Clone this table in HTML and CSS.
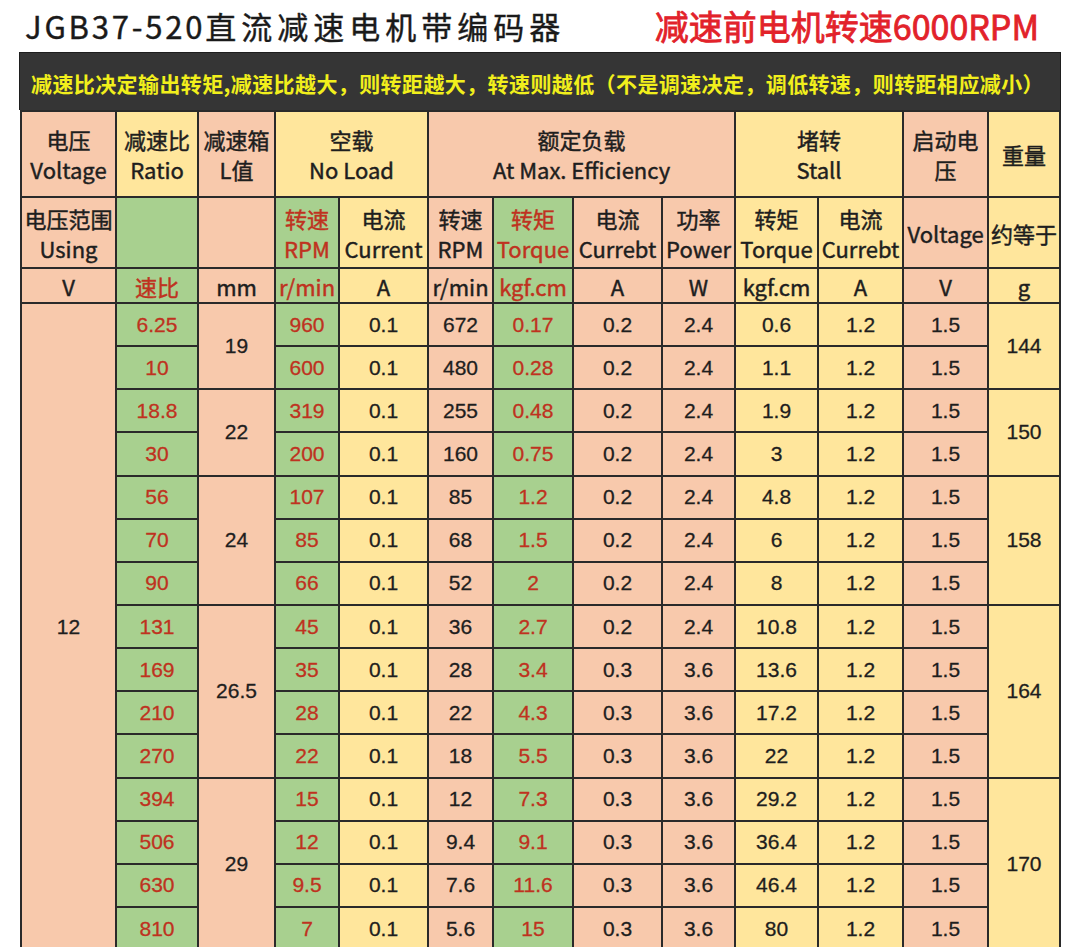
FILE: index.html
```html
<!DOCTYPE html>
<html lang="zh-CN">
<head>
<meta charset="utf-8">
<title>JGB37-520直流减速电机带编码器</title>
<link rel="stylesheet" href="styles.css">
</head>
<body>
<div class="page">
  <header class="titlebar">
    <h1 class="title"><span class="title-code">JGB37-520</span><span class="title-cn">直流减速电机带编码器</span></h1>
    <div class="subtitle">减速前电机转速6000RPM</div>
  </header>
  <div class="banner">减速比决定输出转矩,减速比越大，则转距越大，转速则越低（不是调速决定，调低转速，则转距相应减小）</div>
  <table class="spec">
    <colgroup>
      <col class="c1"><col class="c2"><col class="c3"><col class="c4"><col class="c5"><col class="c6"><col class="c7"><col class="c8"><col class="c9"><col class="c10"><col class="c11"><col class="c12"><col class="c13">
    </colgroup>
    <thead>
      <tr class="h1">
        <th class="s">电压<br>Voltage</th>
        <th class="y">减速比<br>Ratio</th>
        <th class="s">减速箱<br>L值</th>
        <th class="y" colspan="2">空载<br>No Load</th>
        <th class="s" colspan="4">额定负载<br>At Max. Efficiency</th>
        <th class="y stall" colspan="2">堵转<br>Stall</th>
        <th class="s">启动电<br>压</th>
        <th class="y">重量</th>
      </tr>
      <tr class="h2">
        <th class="s">电压范围<br>Using</th>
        <th class="g"></th>
        <th class="s"></th>
        <th class="g r">转速<br>RPM</th>
        <th class="y">电流<br>Current</th>
        <th class="s">转速<br>RPM</th>
        <th class="g r">转矩<br>Torque</th>
        <th class="s">电流<br>Currebt</th>
        <th class="s">功率<br>Power</th>
        <th class="y">转矩<br>Torque</th>
        <th class="y">电流<br>Currebt</th>
        <th class="s">Voltage</th>
        <th class="y">约等于</th>
      </tr>
      <tr class="h3">
        <th class="s">V</th>
        <th class="g r">速比</th>
        <th class="s">mm</th>
        <th class="g r">r/min</th>
        <th class="y">A</th>
        <th class="s">r/min</th>
        <th class="g r">kgf.cm</th>
        <th class="s">A</th>
        <th class="s">W</th>
        <th class="y">kgf.cm</th>
        <th class="y">A</th>
        <th class="s">V</th>
        <th class="y">g</th>
      </tr>
    </thead>
    <tbody>
      <tr>
        <td class="s" rowspan="15">12</td>
        <td class="g r">6.25</td><td class="s" rowspan="2">19</td>
        <td class="g r">960</td><td class="y">0.1</td><td class="s">672</td><td class="g r">0.17</td><td class="s">0.2</td><td class="s">2.4</td><td class="y">0.6</td><td class="y">1.2</td><td class="s">1.5</td>
        <td class="y" rowspan="2">144</td>
      </tr>
      <tr>
        <td class="g r">10</td>
        <td class="g r">600</td><td class="y">0.1</td><td class="s">480</td><td class="g r">0.28</td><td class="s">0.2</td><td class="s">2.4</td><td class="y">1.1</td><td class="y">1.2</td><td class="s">1.5</td>
      </tr>
      <tr>
        <td class="g r">18.8</td><td class="s" rowspan="2">22</td>
        <td class="g r">319</td><td class="y">0.1</td><td class="s">255</td><td class="g r">0.48</td><td class="s">0.2</td><td class="s">2.4</td><td class="y">1.9</td><td class="y">1.2</td><td class="s">1.5</td>
        <td class="y" rowspan="2">150</td>
      </tr>
      <tr>
        <td class="g r">30</td>
        <td class="g r">200</td><td class="y">0.1</td><td class="s">160</td><td class="g r">0.75</td><td class="s">0.2</td><td class="s">2.4</td><td class="y">3</td><td class="y">1.2</td><td class="s">1.5</td>
      </tr>
      <tr>
        <td class="g r">56</td><td class="s" rowspan="3">24</td>
        <td class="g r">107</td><td class="y">0.1</td><td class="s">85</td><td class="g r">1.2</td><td class="s">0.2</td><td class="s">2.4</td><td class="y">4.8</td><td class="y">1.2</td><td class="s">1.5</td>
        <td class="y" rowspan="3">158</td>
      </tr>
      <tr>
        <td class="g r">70</td>
        <td class="g r">85</td><td class="y">0.1</td><td class="s">68</td><td class="g r">1.5</td><td class="s">0.2</td><td class="s">2.4</td><td class="y">6</td><td class="y">1.2</td><td class="s">1.5</td>
      </tr>
      <tr>
        <td class="g r">90</td>
        <td class="g r">66</td><td class="y">0.1</td><td class="s">52</td><td class="g r">2</td><td class="s">0.2</td><td class="s">2.4</td><td class="y">8</td><td class="y">1.2</td><td class="s">1.5</td>
      </tr>
      <tr>
        <td class="g r">131</td><td class="s" rowspan="4">26.5</td>
        <td class="g r">45</td><td class="y">0.1</td><td class="s">36</td><td class="g r">2.7</td><td class="s">0.2</td><td class="s">2.4</td><td class="y">10.8</td><td class="y">1.2</td><td class="s">1.5</td>
        <td class="y" rowspan="4">164</td>
      </tr>
      <tr>
        <td class="g r">169</td>
        <td class="g r">35</td><td class="y">0.1</td><td class="s">28</td><td class="g r">3.4</td><td class="s">0.3</td><td class="s">3.6</td><td class="y">13.6</td><td class="y">1.2</td><td class="s">1.5</td>
      </tr>
      <tr>
        <td class="g r">210</td>
        <td class="g r">28</td><td class="y">0.1</td><td class="s">22</td><td class="g r">4.3</td><td class="s">0.3</td><td class="s">3.6</td><td class="y">17.2</td><td class="y">1.2</td><td class="s">1.5</td>
      </tr>
      <tr>
        <td class="g r">270</td>
        <td class="g r">22</td><td class="y">0.1</td><td class="s">18</td><td class="g r">5.5</td><td class="s">0.3</td><td class="s">3.6</td><td class="y">22</td><td class="y">1.2</td><td class="s">1.5</td>
      </tr>
      <tr>
        <td class="g r">394</td><td class="s" rowspan="4">29</td>
        <td class="g r">15</td><td class="y">0.1</td><td class="s">12</td><td class="g r">7.3</td><td class="s">0.3</td><td class="s">3.6</td><td class="y">29.2</td><td class="y">1.2</td><td class="s">1.5</td>
        <td class="y" rowspan="4">170</td>
      </tr>
      <tr>
        <td class="g r">506</td>
        <td class="g r">12</td><td class="y">0.1</td><td class="s">9.4</td><td class="g r">9.1</td><td class="s">0.3</td><td class="s">3.6</td><td class="y">36.4</td><td class="y">1.2</td><td class="s">1.5</td>
      </tr>
      <tr>
        <td class="g r">630</td>
        <td class="g r">9.5</td><td class="y">0.1</td><td class="s">7.6</td><td class="g r">11.6</td><td class="s">0.3</td><td class="s">3.6</td><td class="y">46.4</td><td class="y">1.2</td><td class="s">1.5</td>
      </tr>
      <tr>
        <td class="g r">810</td>
        <td class="g r">7</td><td class="y">0.1</td><td class="s">5.6</td><td class="g r">15</td><td class="s">0.3</td><td class="s">3.6</td><td class="y">80</td><td class="y">1.2</td><td class="s">1.5</td>
      </tr>
    </tbody>
  </table>
</div>
</body>
</html>
```
FILE: styles.css
```css
html, body {
  margin: 0;
  padding: 0;
  background: #ffffff;
}

.page {
  padding-left: 19px;
  width: 1042px;
  font-family: "Noto Sans CJK SC", "Noto Sans", sans-serif;
  color: #1c1c1c;
}

.titlebar {
  height: 52px;
  display: flex;
  align-items: center;
  justify-content: space-between;
  padding: 0 22px 0 6px;
  box-sizing: border-box;
}

.title {
  margin: 0;
  font-size: 31px;
  font-weight: 400;
  line-height: 40px;
  color: #1a1a1a;
  white-space: nowrap;
  -webkit-text-stroke: 0.4px #1a1a1a;
}

.title-code {
  letter-spacing: 2.8px;
}

.title-cn {
  letter-spacing: 5px;
}

.subtitle {
  font-size: 34px;
  font-weight: 400;
  line-height: 40px;
  color: #e2222a;
  white-space: nowrap;
  -webkit-text-stroke: 0.8px #e2222a;
}

.banner {
  height: 58px;
  box-sizing: border-box;
  background: #353535;
  color: #f1ef1c;
  font-size: 21px;
  font-weight: 700;
  line-height: 24px;
  padding: 18px 0 0 11px;
  white-space: nowrap;
  letter-spacing: 0.4px;
  border: 1px solid #1e1e1e;
  border-bottom: none;
}

.spec {
  border-collapse: collapse;
  table-layout: fixed;
  width: 1041px;
  margin-left: 1px;
}

.c1 { width: 95px; }
.c2 { width: 82px; }
.c3 { width: 77px; }
.c4 { width: 64px; }
.c5 { width: 89px; }
.c6 { width: 65px; }
.c7 { width: 80px; }
.c8 { width: 89px; }
.c9 { width: 73px; }
.c10 { width: 83px; }
.c11 { width: 85px; }
.c12 { width: 85px; }
.c13 { width: 72px; }

.spec th,
.spec td {
  border: 2px solid #2a2a2a;
  padding: 0;
  text-align: center;
  vertical-align: middle;
  white-space: nowrap;
  overflow: hidden;
}

.spec th {
  font-size: 22px;
  font-weight: 400;
  line-height: 30px;
  color: #1e1e1e;
  -webkit-text-stroke: 0.45px #1e1e1e;
}

.spec td {
  font-family: "Liberation Sans", Arial, sans-serif;
  font-size: 21px;
  line-height: 24px;
  color: #1e1e1e;
  -webkit-text-stroke: 0.3px #1e1e1e;
}

.h1 { height: 86px; }
.h2 { height: 71px; }
.h3 { height: 35px; }
.spec tbody tr { height: 43.15px; }

.spec .h3 th {
  line-height: 24px;
}

.stall {
  padding-left: 72px;
}

.s { background: #f8c9ac; }
.y { background: #ffe69c; }
.g { background: #a8d08f; }
.spec .r {
  color: #bf3220;
  -webkit-text-stroke-color: #bf3220;
}
```
